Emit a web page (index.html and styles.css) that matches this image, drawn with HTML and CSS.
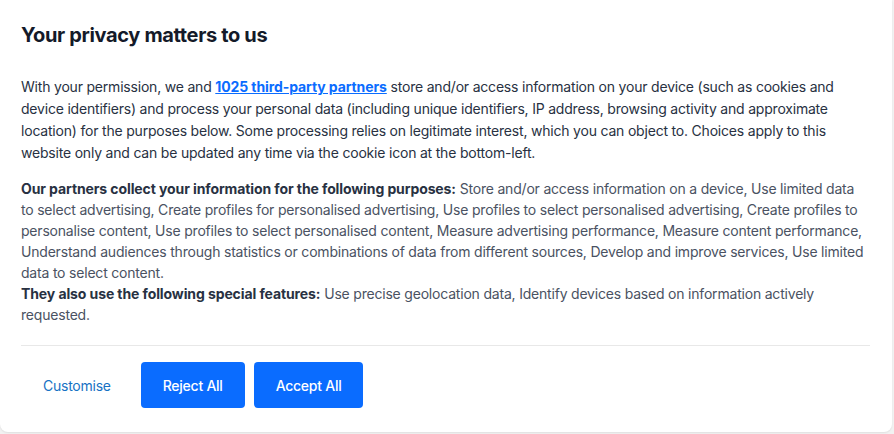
FILE: index.html
```html
<!DOCTYPE html>
<html lang="en">
<head>
<meta charset="utf-8">
<title>Your privacy matters to us</title>
<link rel="stylesheet" href="styles.css">
</head>
<body>
<div class="dialog">
  <h1 class="title">Your privacy matters to us</h1>
  <p class="intro">With your permission, we and <a class="partners" href="#">1025 third-party partners</a> store and/or access information on your device (such as cookies and device identifiers) and process your personal data (including unique identifiers, IP address, browsing activity and approximate location) for the purposes below. Some processing relies on legitimate interest, which you can object to. Choices apply to this website only and can be updated any time via the cookie icon at the bottom-left.</p>
  <div class="purposes">
    <p><strong>Our partners collect your information for the following purposes:</strong> Store and/or access information on a device, Use limited data to select advertising, Create profiles for personalised advertising, Use profiles to select personalised advertising, Create profiles to personalise content, Use profiles to select personalised content, Measure advertising performance, Measure content performance, Understand audiences through statistics or combinations of data from different sources, Develop and improve services, Use limited data to select content.</p>
    <p><strong>They also use the following special features:</strong> Use precise geolocation data, Identify devices based on information actively requested.</p>
  </div>
  <div class="actions">
    <button class="btn link">Customise</button>
    <button class="btn primary">Reject All</button>
    <button class="btn primary">Accept All</button>
  </div>
</div>
</body>
</html>
```

FILE: styles.css
```css
html, body {
  margin: 0;
  padding: 0;
  background: #f2f2f2;
}
body {
  font-family: Inter, "Noto Sans", sans-serif;
  letter-spacing: -0.2px;
  width: 894px;
  height: 434px;
  overflow: hidden;
}
.dialog {
  box-sizing: border-box;
  width: 892px;
  height: 432px;
  background: #fff;
  border-radius: 0 0 8px 8px;
  box-shadow: 0 1px 2px rgba(0,0,0,0.08);
  padding: 21px 22px 0 21px;
}
.title {
  margin: 0;
  font-size: 20px;
  line-height: 28px;
  font-weight: 700;
  color: #141a29;
  letter-spacing: -0.35px;
}
.intro {
  margin: 27px 0 0 0;
  font-size: 14px;
  line-height: 22px;
  color: #283142;
}
.partners {
  color: #0a6cff;
  font-weight: 700;
  letter-spacing: -0.1px;
  text-decoration: underline;
}
.purposes {
  margin-top: 14px;
  font-size: 14px;
  line-height: 21px;
  color: #4a5262;
  padding-bottom: 20px;
  border-bottom: 1px solid #e8e8e8;
}
.purposes p {
  margin: 0;
}
.purposes strong {
  color: #283142;
  font-weight: 700;
  letter-spacing: -0.1px;
}
.actions {
  display: flex;
  gap: 9px;
  padding-top: 16px;
}
.btn {
  font-family: inherit;
  font-size: 14px;
  letter-spacing: -0.25px;
  font-weight: 500;
  height: 46px;
  padding: 0 22px;
  border: 0;
  border-radius: 4px;
  cursor: pointer;
}
.btn.link {
  background: transparent;
  color: #1772c4;
  font-weight: 400;
  margin-right: -1px;
}
.btn.primary {
  background: #0a6cff;
  color: #fff;
}
```
